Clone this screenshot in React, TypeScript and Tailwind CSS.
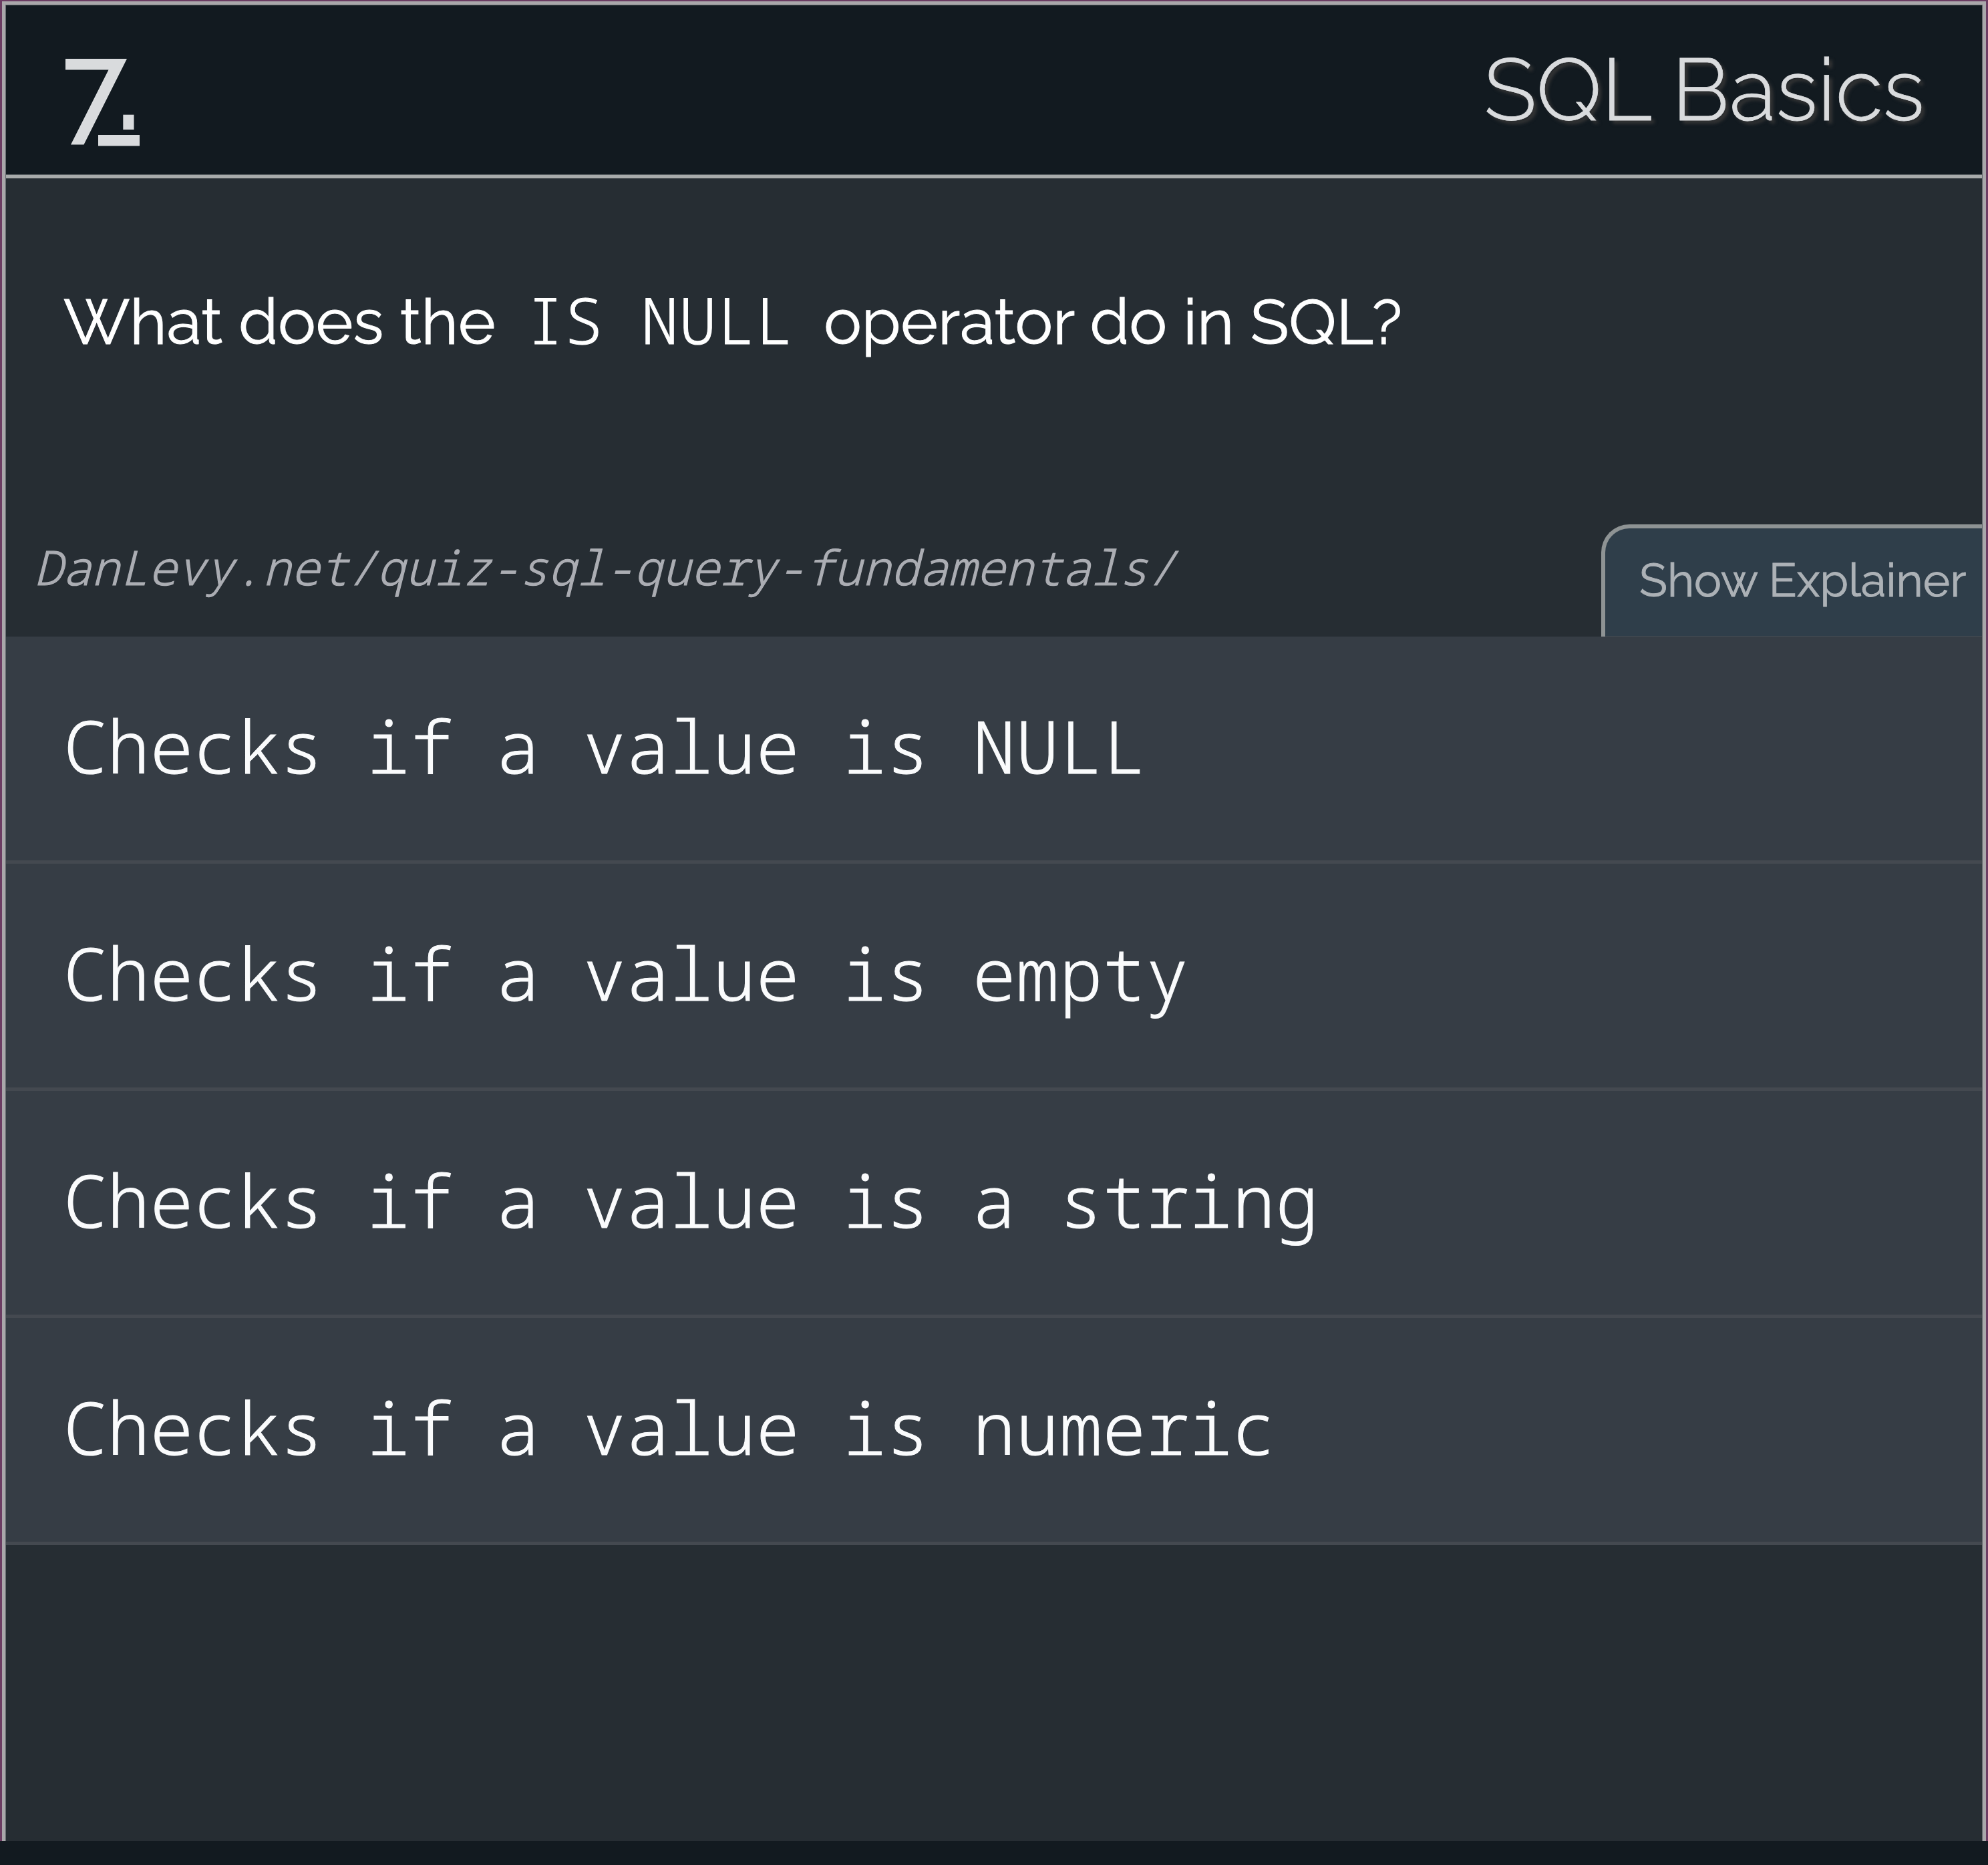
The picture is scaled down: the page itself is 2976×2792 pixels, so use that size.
const options = [
  "Checks if a value is NULL",
  "Checks if a value is empty",
  "Checks if a value is a string",
  "Checks if a value is numeric",
];

function Logo() {
  return (
    <svg viewBox="0 0 111 131" className="h-[131px] w-[111px] fill-[#d9dbdd]" aria-hidden="true">
      <path d="M0 0H92L27.5 128.5H8L64.5 16.5H0Z" />
      <path d="M86.3 83.7H102.5V106H86.3Z" />
      <path d="M49 114H111V130.5H49Z" />
    </svg>
  );
}

function Header() {
  return (
    <header className="flex h-[259px] shrink-0 items-start justify-between border-b-[5px] border-[#a8abab] bg-[#121a20] pr-[86px] pl-[89px] shadow-[inset_0_-1px_0_#62696c]">
      <div className="pt-[80px]">
        <Logo />
      </div>
      <h1 className="pt-[46px] font-['Raleway',sans-serif] text-[130px] leading-[160px] font-light whitespace-nowrap text-[#d9dbdd] [-webkit-text-stroke:0.8px_#d9dbdd] [text-shadow:5px_5px_5px_#363636]">
        SQL Basics
      </h1>
    </header>
  );
}

function Question() {
  return (
    <section className="flex h-[686px] shrink-0 flex-col justify-between">
      <h2 className="pt-[155px] pl-[86px] font-['Raleway',sans-serif] text-[95px] leading-[120px] font-normal whitespace-nowrap text-white [-webkit-text-stroke:1px_#ffffff]">
        What does the{" "}
        <code className="px-[22px] font-['Noto_Sans_Mono',monospace] text-[95px] leading-none font-light [-webkit-text-stroke:1.1px_#ffffff]">
          IS NULL
        </code>{" "}
        operator do in SQL?
      </h2>
      <div className="flex items-end justify-between">
        <p className="pb-[54px] pl-[42px] font-['Noto_Sans_Mono',monospace] text-[71.25px] leading-[100px] font-light whitespace-nowrap text-[#abadb3] italic [-webkit-text-stroke:1.2px_#abadb3]">
          DanLevy.net/quiz-sql-query-fundamentals/
        </p>
        <button className="h-[168px] w-[570px] rounded-tl-[42px] border-t-[6px] border-l-[6px] border-[#8e9394] bg-[#2f3e4a] pb-[6px] pl-[51px] text-left font-['Raleway',sans-serif] text-[69px] leading-[80px] font-normal whitespace-nowrap text-[#acb1b6] shadow-[inset_0_-1px_0_#434c54] [-webkit-text-stroke:0.9px_#acb1b6]">
          Show Explainer
        </button>
      </div>
    </section>
  );
}

export default function App() {
  return (
    <div className="flex h-[2792px] w-[2976px] flex-col overflow-hidden bg-[#121a20]">
      <div className="flex h-[2756px] w-full flex-col bg-[#6b3c62] px-[3px] pt-[2px]">
        <main className="flex flex-1 flex-col border-x-[5px] border-t-[5px] border-[#a9a7aa] bg-[#262d33]">
          <div className="flex flex-1 flex-col border-x border-t border-[#62686c]">
            <Header />
            <Question />
            <ul>
              {options.map((option) => (
                <li
                  key={option}
                  className="h-[340px] border-b-[5px] border-[#444950] bg-[#363d45] pt-[94px] pl-[86px] font-['Noto_Sans_Mono',monospace] text-[108px] leading-[140px] font-light whitespace-nowrap text-[#fafbfc] [-webkit-text-stroke:1.1px_#fafbfc]"
                >
                  {option}
                </li>
              ))}
            </ul>
          </div>
        </main>
      </div>
    </div>
  );
}
